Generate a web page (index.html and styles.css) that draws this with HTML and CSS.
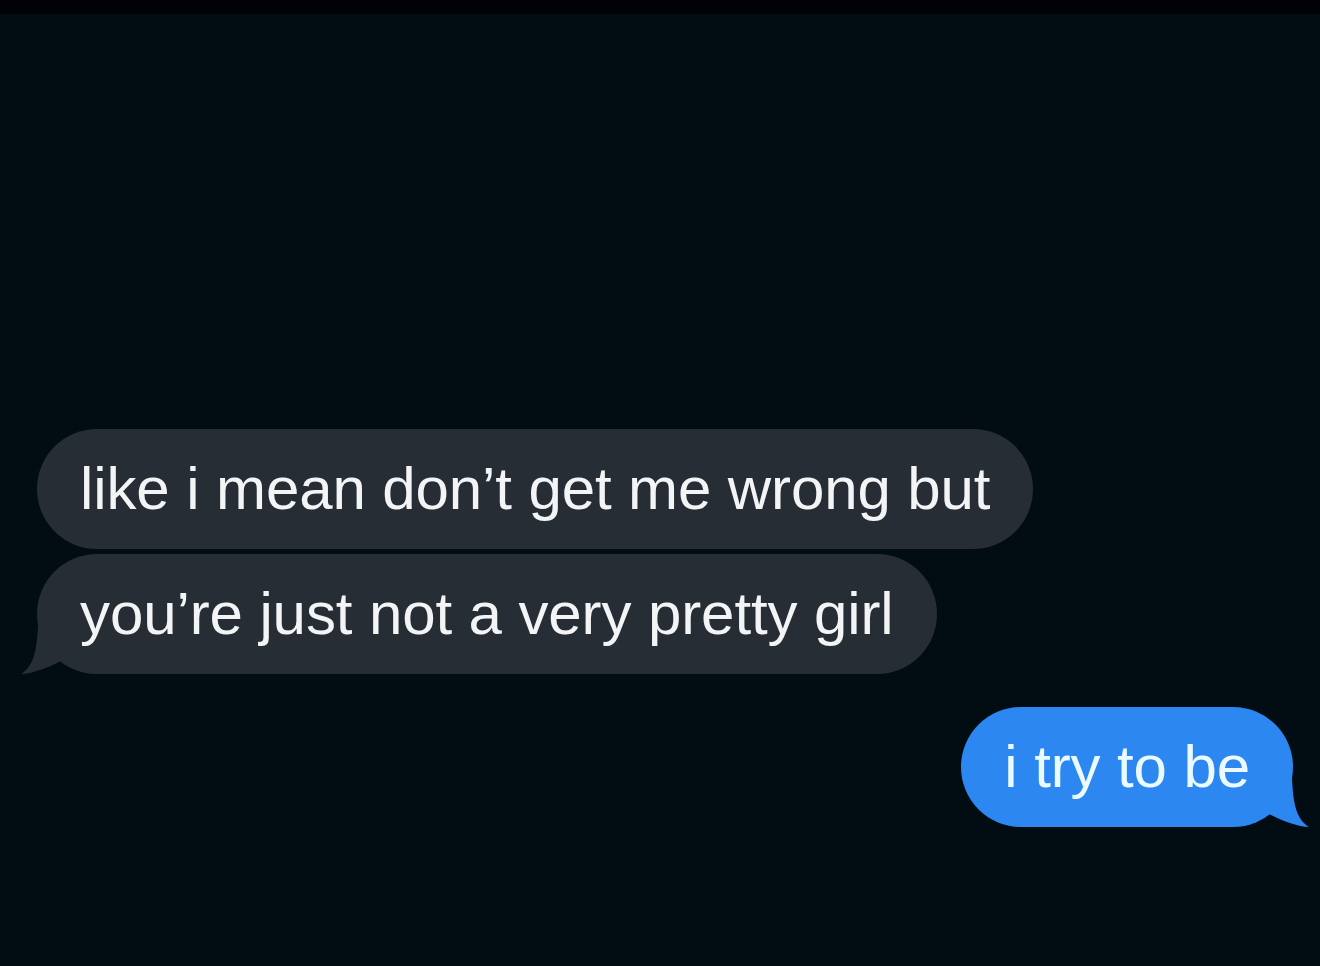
FILE: index.html
```html
<!DOCTYPE html>
<html lang="en">
<head>
    <meta charset="UTF-8">
    <meta name="viewport" content="width=device-width, initial-scale=1.0">
    <title>Messages</title>
    <link rel="stylesheet" href="styles.css">
</head>
<body>

    <div class="topbar"></div>

    <div class="thread">
        <div class="bubble them">like i mean don’t get me wrong but</div>
        <div class="bubble them tail">you’re just not a very pretty girl</div>
        <div class="bubble me tail">i try to be</div>
    </div>

</body>
</html>
```

FILE: styles.css
```css
/* General Styling */
* {
    box-sizing: border-box;
    margin: 0;
    padding: 0;
    font-family: 'Liberation Sans', Arial, sans-serif;
}

body {
    background: #020c13;
    width: 1320px;
    height: 966px;
    overflow: hidden;
    display: flex;
    flex-direction: column;
}

.topbar {
    height: 14px;
    background: #000205;
}

/* Conversation */
.thread {
    flex: 1;
    display: flex;
    flex-direction: column;
    padding: 415px 27px 0 37px;
}

.bubble {
    position: relative;
    z-index: 0;
    font-size: 60px;
    line-height: 72px;
    letter-spacing: -0.1px;
    padding: 24px 43px;
    height: 120px;
    border-radius: 60px;
    white-space: nowrap;
}

.them {
    align-self: flex-start;
    background: #272d34;
    color: #f3f4f5;
}

.them + .them {
    margin-top: 5px;
}

.me {
    align-self: flex-end;
    margin-top: 33px;
    background: #2d87f1;
    color: #eafaff;
}

/* Tails: a drooping lobe under the last bubble of a group */
.tail::before {
    content: "";
    position: absolute;
    z-index: -1;
    bottom: 0;
    width: 60px;
    height: 50px;
}

.them.tail::before {
    left: -16px;
    background: #272d34;
    clip-path: path('M 17 0 C 16 26, 13 42, 0 50 C 10 50, 26 44, 38 38 L 60 30 L 60 0 Z');
}

.me.tail::before {
    right: -16px;
    background: #2d87f1;
    clip-path: path('M 43 0 C 44 26, 47 42, 60 50 C 50 50, 34 44, 22 38 L 0 30 L 0 0 Z');
}
```
